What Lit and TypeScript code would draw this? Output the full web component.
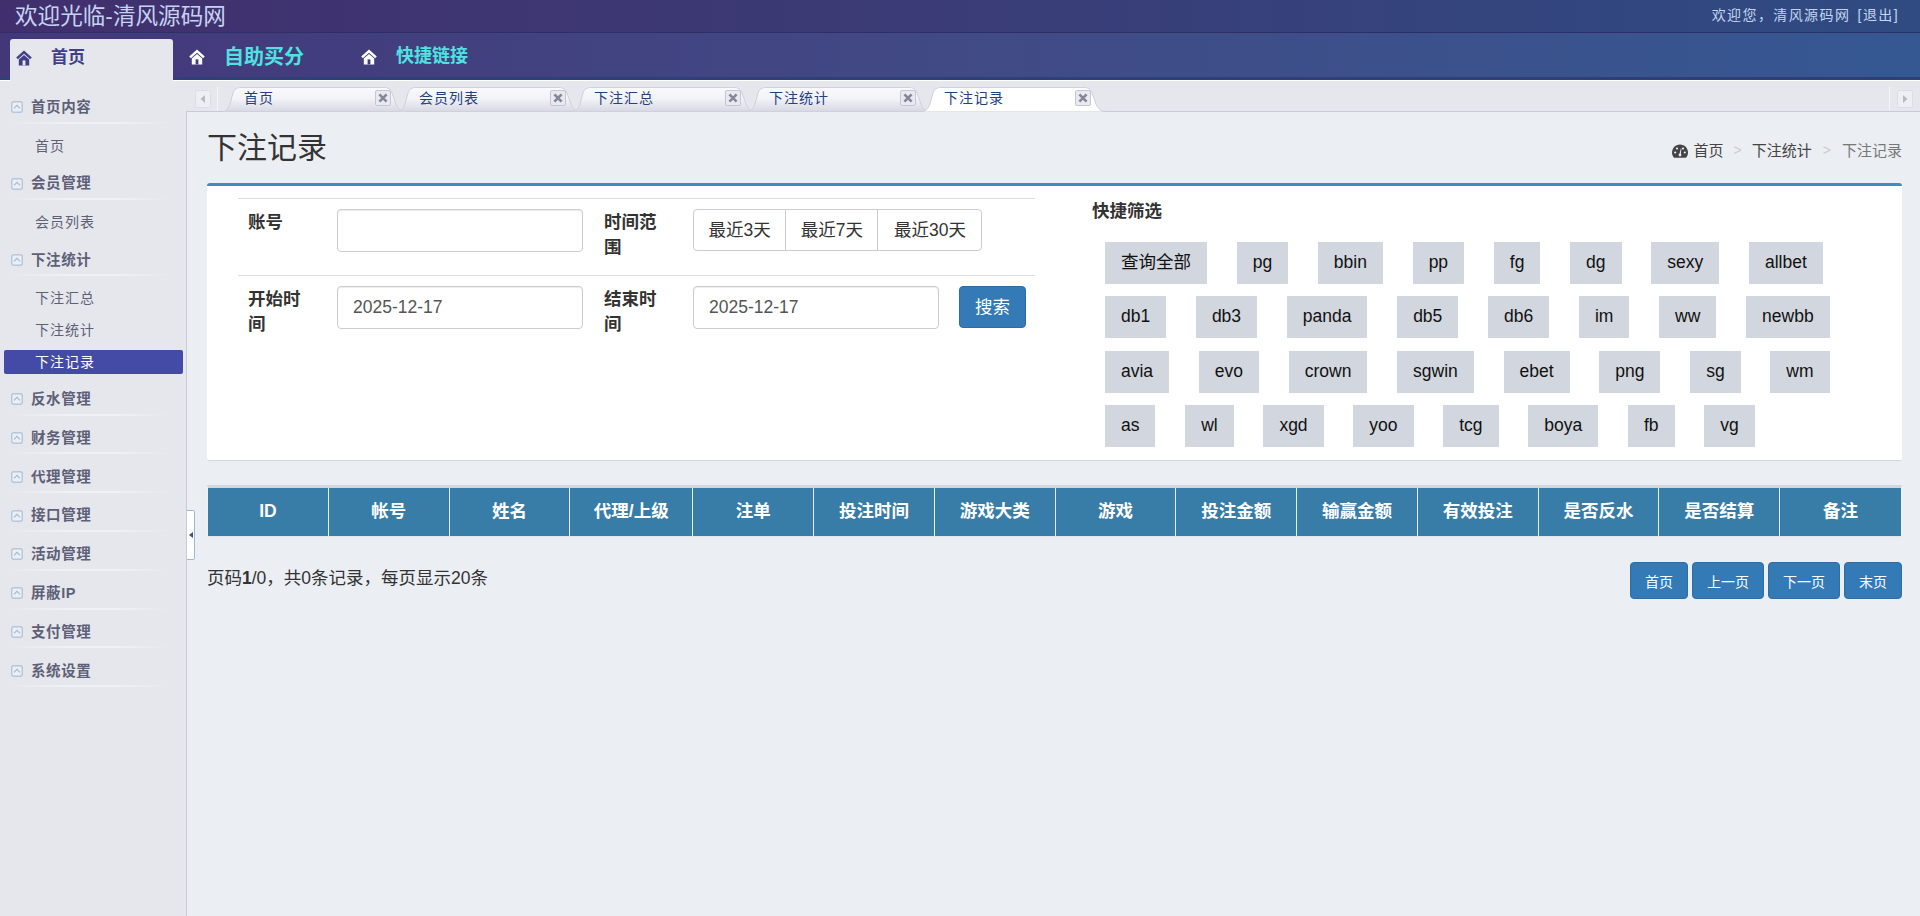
import { LitElement, html, css, svg } from 'lit';
import { customElement } from 'lit/decorators.js';
import { classMap } from 'lit/directives/class-map.js';

const house = (body: string, door: string) => html`
  <svg class="house" viewBox="0 0 16 16" width="16" height="16">
    ${svg`<path d="M8 .6 .2 7.400l1.700 1.800L8 3.800l6.100 5.400 1.700-1.800z" fill="${body}" />
      <path d="M2.800 9.400 8 5l5.200 4.400v6H2.800z" fill="${body}" />
      <rect x="6.600" y="10.400" width="2.800" height="5" fill="${door}" />`}
  </svg>
`;

const chevBox = html`
  <svg class="chev" viewBox="0 0 12 12" width="12" height="12">
    ${svg`<rect x=".7" y=".7" width="10.600" height="10.600" rx="2" fill="#eaeef5" stroke="#b6c6db" stroke-width="1.400" />
      <path d="M3 7.400 6 4.400l3 3" fill="none" stroke="#a6b8d0" stroke-width="1.100" />`}
  </svg>
`;

const closeIcon = html`
  <svg class="close" viewBox="0 0 16 16" width="16" height="16">
    ${svg`<rect x=".5" y=".5" width="15" height="15" rx="1.5" fill="#e9e9f0" stroke="#c4c5d5" />
      <path d="M4.400 4.400l7.200 7.200M11.600 4.400l-7.200 7.200" stroke="#85869b" stroke-width="2.600" />`}
  </svg>
`;

const scrollBtn = (d: string) => html`
  <svg class="scroll" viewBox="0 0 16 18" width="16" height="18">
    ${svg`<rect x=".5" y=".5" width="15" height="17" rx="2" fill="#efeff3" stroke="#dcdce4" />
      <path d="${d}" fill="#b9b9c4" />`}
  </svg>
`;

const gauge = html`
  <svg class="gauge" viewBox="0 0 16 14" width="16" height="14">
    ${svg`<path d="M8 .5C3.600.5 0 4.100 0 8.500c0 2 .7 3.800 2 5.200h12c1.300-1.400 2-3.200 2-5.200C16 4.100 12.400.5 8 .5z" fill="#444" />
      <circle cx="3.200" cy="8.500" r="1.100" fill="#ebeef3" />
      <circle cx="5" cy="4.500" r="1.100" fill="#ebeef3" />
      <circle cx="11" cy="4.500" r="1.100" fill="#ebeef3" />
      <circle cx="12.800" cy="8.500" r="1.100" fill="#ebeef3" />
      <path d="M7.300 11 8.800 4.600l.6.100L8.700 11z" fill="#ebeef3" />
      <circle cx="8" cy="11" r="1.400" fill="#ebeef3" />`}
  </svg>
`;

const menu = [
  { name: '首页内容', items: ['首页'] },
  { name: '会员管理', items: ['会员列表'] },
  { name: '下注统计', items: ['下注汇总', '下注统计', '下注记录'] },
  { name: '反水管理', items: [] },
  { name: '财务管理', items: [] },
  { name: '代理管理', items: [] },
  { name: '接口管理', items: [] },
  { name: '活动管理', items: [] },
  { name: '屏蔽IP', items: [] },
  { name: '支付管理', items: [] },
  { name: '系统设置', items: [] },
];

const tabs = ['首页', '会员列表', '下注汇总', '下注统计', '下注记录'];

const filters = [
  '查询全部', 'pg', 'bbin', 'pp', 'fg', 'dg', 'sexy', 'allbet',
  'db1', 'db3', 'panda', 'db5', 'db6', 'im', 'ww', 'newbb',
  'avia', 'evo', 'crown', 'sgwin', 'ebet', 'png', 'sg', 'wm',
  'as', 'wl', 'xgd', 'yoo', 'tcg', 'boya', 'fb', 'vg',
];

const columns = [
  'ID', '帐号', '姓名', '代理/上级', '注单', '投注时间', '游戏大类',
  '游戏', '投注金额', '输赢金额', '有效投注', '是否反水', '是否结算', '备注',
];

@customElement('app-root')
export class AppRoot extends LitElement {
  static styles = css`
    :host {
      display: block;
      height: 916px;
      overflow: hidden;
      position: relative;
      font-family: 'Liberation Sans', 'Noto Sans CJK SC', sans-serif;
      font-size: 17.500px;
      line-height: 1.42857;
      color: #333;
      background: #e6e7ec;
    }
    * {
      box-sizing: border-box;
    }
    svg {
      display: block;
      flex: none;
    }

    .top {
      height: 33px;
      display: flex;
      align-items: center;
      justify-content: space-between;
      padding: 0 21px 0 15px;
      background: linear-gradient(90deg, #412f6d, #3a3c77 50%, #2f4b82);
      border-bottom: 1px solid #2e2f66;
    }
    .brand {
      font-size: 22.600px;
      line-height: 33px;
      color: #c5d3f2;
    }
    .hello {
      font-size: 14px;
      letter-spacing: 1.400px;
      word-spacing: 2px;
      color: #c3d4f2;
    }

    .nav {
      height: 48px;
      display: flex;
      align-items: flex-end;
      padding-left: 10px;
      background: linear-gradient(90deg, #43377a, #414a85 50%, #355892);
      border-bottom: 1px solid #fff;
      box-shadow: inset 0 -3px 0 #2f3f78;
    }
    .nav-home {
      width: 163px;
      height: 42px;
      margin-bottom: -1px;
      display: flex;
      align-items: center;
      gap: 19px;
      padding: 0 0 3px 6px;
      background: #e6e7ec;
      border-radius: 3px 3px 0 0;
      font-size: 17px;
      font-weight: 700;
      color: #403f88;
    }
    .nav-home .house {
      margin-top: -2px;
    }
    .nav-link {
      height: 42px;
      display: flex;
      align-items: center;
      gap: 19px;
      padding-bottom: 4px;
      font-weight: 700;
      color: #4fe2e0;
    }
    .nav-link.buy {
      margin-left: 16px;
      font-size: 20px;
    }
    .nav-link.fast {
      margin-left: 57px;
      font-size: 18px;
    }

    .body {
      display: flex;
      height: 835px;
    }

    .side {
      width: 186px;
      flex: none;
      padding-top: 7px;
    }
    .group-head {
      height: 38.800px;
      display: flex;
      align-items: center;
      gap: 8px;
      padding: 0 0 0 11px;
      font-size: 14.500px;
      font-weight: 700;
      letter-spacing: 0.600px;
      color: #5d6077;
      position: relative;
    }
    .group-head::after {
      content: '';
      position: absolute;
      left: 8px;
      right: 16px;
      bottom: 3px;
      height: 2px;
      background: linear-gradient(90deg, transparent, #f1f1f5 35%, #f1f1f5 65%, transparent);
    }
    .group-items {
      padding: 4px 3px 2px 4px;
    }
    .item {
      height: 31.500px;
      line-height: 31.500px;
      padding-left: 31px;
      font-size: 14px;
      letter-spacing: 1px;
      color: #5d6077;
    }
    .item.active {
      height: 24px;
      line-height: 24px;
      margin: 3.500px 0 4px;
      border-radius: 2px;
      background: #434ba6;
      color: #fff;
    }

    .right {
      flex: 1;
      min-width: 0;
      display: flex;
      flex-direction: column;
    }
    .tabbar {
      height: 31px;
      flex: none;
      display: flex;
      position: relative;
      padding: 6px 7px 0 9px;
      border-bottom: 1px solid #c8c9d9;
    }
    .scroll {
      margin-top: 3px;
    }
    .sep {
      width: 1px;
      height: 23px;
      margin: 0 8px 0 6px;
      background: #f6f6f9;
      flex: none;
    }
    .tabs {
      display: flex;
      flex: 1;
    }
    .tab {
      position: relative;
      width: 180px;
      height: 25px;
      margin-right: -5px;
      padding-left: 18px;
      font-size: 14px;
      line-height: 23px;
      letter-spacing: 1px;
      color: #23407f;
      flex: none;
    }
    .tab.active {
      z-index: 2;
    }
    .tab-bg {
      position: absolute;
      left: -4px;
      top: 0;
    }
    .tab span {
      position: relative;
    }
    .close {
      position: absolute;
      left: 149px;
      top: 3px;
    }
    .tabbar .sep.end {
      margin: 0 7px 0 0;
    }

    .content {
      flex: 1;
      background: #ebeef3;
      border-left: 1px solid #c8c9d9;
      padding: 13px 18px 0 20px;
    }
    .title-row {
      height: 46px;
      display: flex;
      align-items: center;
      justify-content: space-between;
    }
    h1 {
      margin: 0;
      font-size: 30px;
      line-height: 46px;
      font-weight: 400;
      color: #333;
    }
    .crumbs {
      display: flex;
      align-items: center;
      margin-top: 6px;
      font-size: 15px;
      color: #444;
    }
    .gauge {
      margin-right: 6px;
    }
    .crumbs i {
      font-style: normal;
      font-size: 14px;
      color: #ccc;
      margin: 0 10px;
    }
    .crumbs i.last {
      margin: 0 11px;
    }
    .crumbs .now {
      color: #777;
    }

    .box {
      margin-top: 12px;
      height: 278px;
      display: flex;
      background: #fff;
      border-top: 3px solid #3f8cbd;
      border-bottom: 1px solid #d2d6de;
      border-radius: 3px;
    }
    .form {
      width: 797px;
      margin: 12px 0 0 31px;
      flex: none;
    }
    .row {
      display: grid;
      grid-template-columns: 91px 267px 89px 350px;
      height: 77px;
      padding-top: 10px;
      border-top: 1px solid #ddd;
    }
    .label {
      padding: 1px 0 0 10px;
      font-weight: 700;
      line-height: 25px;
    }
    .label span {
      display: block;
      max-width: 60px;
    }
    .label.second {
      padding-left: 8px;
    }
    .field {
      padding-left: 8px;
      display: flex;
      gap: 20px;
      align-items: flex-start;
    }
    input {
      width: 246px;
      height: 43px;
      padding: 0 15px;
      border: 1px solid #ccc;
      border-radius: 4px;
      background: #fff;
      box-shadow: inset 0 1px 1px rgba(0, 0, 0, 0.075);
      font: inherit;
      color: #555;
    }
    .group {
      display: flex;
    }
    .group button {
      height: 42px;
      padding: 0 14.500px;
      margin-left: -1px;
      background: #fff;
      border: 1px solid #ccc;
      font: inherit;
      color: #333;
    }
    .group button:first-child {
      margin-left: 0;
      border-radius: 4px 0 0 4px;
    }
    .group button:last-child {
      padding: 0 15.500px;
      border-radius: 0 4px 4px 0;
    }
    .search {
      height: 42px;
      padding: 0 15px;
      background: #337ab7;
      border: 1px solid #2e6da4;
      border-radius: 4px;
      font: inherit;
      color: #fff;
    }

    .quick {
      flex: 1;
      margin-left: 57px;
      padding-top: 13px;
    }
    .quick-title {
      font-weight: 700;
      line-height: 24px;
    }
    .chips {
      display: flex;
      flex-wrap: wrap;
      gap: 12.400px 29.700px;
      margin-top: 19px;
      padding-left: 13px;
      width: 780px;
    }
    .chip {
      height: 42px;
      line-height: 41px;
      padding: 0 16px;
      background: #d2d6de;
      color: #111;
    }

    .grid {
      margin-top: 24px;
      display: grid;
      grid-template-columns: repeat(3, 1fr) 123px repeat(10, 1fr);
      border-top: 3px solid #d2d6de;
      border-left: 1px solid #eef0f4;
      border-right: 1px solid #eef0f4;
      border-bottom: 1px solid #e3e6ec;
      background: #387da8;
    }
    .th {
      height: 48px;
      line-height: 47px;
      text-align: center;
      font-weight: 700;
      color: #fff;
      border-right: 1px solid #e6edf2;
    }
    .th:last-child {
      border-right: 0;
    }

    .foot {
      margin-top: 25px;
      display: flex;
      justify-content: space-between;
      align-items: flex-start;
    }
    .count {
      margin-top: 4px;
      line-height: 24px;
    }
    .pager {
      display: flex;
      gap: 4px;
    }
    .pager button {
      height: 37px;
      padding: 0 14px;
      background: #337ab7;
      border: 1px solid #2e6da4;
      border-radius: 4px;
      font-family: inherit;
      font-size: 14px;
      color: #fff;
    }

    .toggle {
      position: absolute;
      left: 187px;
      top: 510px;
      width: 8px;
      height: 50px;
      background: #fff;
      border: 1px solid #9db5df;
      border-left: 0;
      border-radius: 0 2px 2px 0;
      display: flex;
      align-items: center;
      justify-content: center;
    }
    .toggle::before {
      content: '';
      border: 3.500px solid transparent;
      border-left: 0;
      border-right: 4px solid #3f4f80;
    }
  `;

  private renderTab(name: string, i: number) {
    const active = i === tabs.length - 1;
    return html`
      <div class=${classMap({ tab: true, active })}>
        <svg class="tab-bg" viewBox="0 0 184 25" width="184" height="25">
          ${svg`<defs>
              <linearGradient id="tabfill" x1="0" y1="0" x2="0" y2="1">
                <stop offset="0" stop-color="#fafafd" />
                <stop offset="0.45" stop-color="#f3f3f8" />
                <stop offset="1" stop-color="#d7d8e3" />
              </linearGradient>
            </defs>
            <path
              d="M0 24.500C4 24.500 6 22 8 17L11 6C12.500 2 15 .5 19 .5H162C166 .5 168.500 2 170 6L174 17C176 22 179 24.500 184 24.500"
              fill="${active ? '#fff' : 'url(#tabfill)'}"
              stroke="#cfd0dc"
            />`}
        </svg>
        <span>${name}</span>
        ${closeIcon}
      </div>
    `;
  }

  render() {
    return html`
      <div class="top">
        <div class="brand">欢迎光临-清风源码网</div>
        <div class="hello">欢迎您，清风源码网 [退出]</div>
      </div>
      <div class="nav">
        <div class="nav-home">${house('#433f85', '#e6e7ec')}<span>首页</span></div>
        <div class="nav-link buy">${house('#fff', '#3f3a7a')}<span>自助买分</span></div>
        <div class="nav-link fast">${house('#fff', '#3f3a7a')}<span>快捷链接</span></div>
      </div>
      <div class="body">
        <aside class="side">
          ${menu.map(
            (g) => html`
              <div class="group-head">${chevBox}<span>${g.name}</span></div>
              ${g.items.length
                ? html`<div class="group-items">
                    ${g.items.map(
                      (it) => html`<div class=${classMap({ item: true, active: it === '下注记录' })}>${it}</div>`,
                    )}
                  </div>`
                : ''}
            `,
          )}
        </aside>
        <div class="right">
          <div class="tabbar">
            ${scrollBtn('M10 5v8L5.500 9z')}
            <div class="sep"></div>
            <div class="tabs">${tabs.map((t, i) => this.renderTab(t, i))}</div>
            <div class="sep end"></div>
            ${scrollBtn('M6 5v8l4.500-4z')}
          </div>
          <main class="content">
            <div class="title-row">
              <h1>下注记录</h1>
              <div class="crumbs">
                ${gauge}<span>首页</span><i>&gt;</i><span>下注统计</span><i class="last">&gt;</i><span class="now">下注记录</span>
              </div>
            </div>
            <section class="box">
              <div class="form">
                <div class="row">
                  <div class="label"><span>账号</span></div>
                  <div class="field"><input type="text" /></div>
                  <div class="label second"><span>时间范围</span></div>
                  <div class="field">
                    <div class="group">
                      <button>最近3天</button><button>最近7天</button><button>最近30天</button>
                    </div>
                  </div>
                </div>
                <div class="row">
                  <div class="label"><span>开始时间</span></div>
                  <div class="field"><input type="text" value="2025-12-17" /></div>
                  <div class="label second"><span>结束时间</span></div>
                  <div class="field">
                    <input type="text" value="2025-12-17" />
                    <button class="search">搜索</button>
                  </div>
                </div>
              </div>
              <div class="quick">
                <div class="quick-title">快捷筛选</div>
                <div class="chips">${filters.map((f) => html`<div class="chip">${f}</div>`)}</div>
              </div>
            </section>
            <div class="grid">${columns.map((c) => html`<div class="th">${c}</div>`)}</div>
            <div class="foot">
              <div class="count">页码<b>1</b>/0，共0条记录，每页显示20条</div>
              <div class="pager">
                <button>首页</button><button>上一页</button><button>下一页</button><button>末页</button>
              </div>
            </div>
          </main>
        </div>
      </div>
      <div class="toggle"></div>
    `;
  }
}
